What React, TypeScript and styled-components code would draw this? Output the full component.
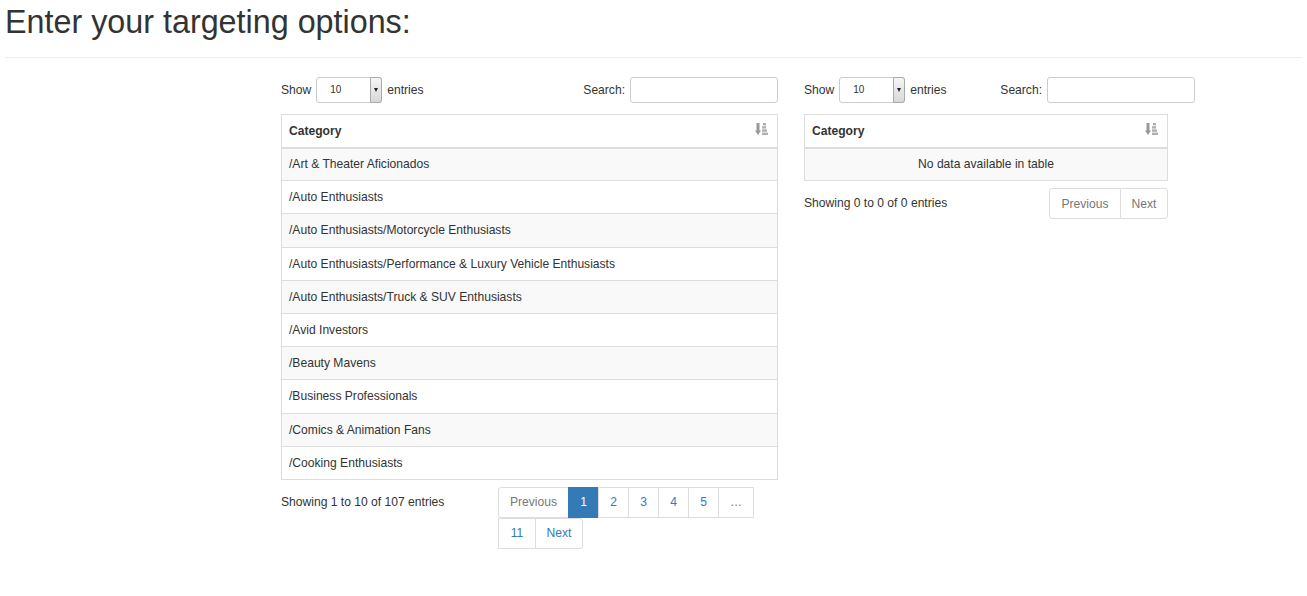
import styled, { createGlobalStyle } from 'styled-components';

const GlobalStyle = createGlobalStyle`
    body {
        margin: 0;
        background: #fff;
        color: #333;
        font-family: "Liberation Sans", Arial, sans-serif;
        font-size: 12.1px;
    }
`;

const Page = styled.div`
    padding: 0 5px;
`;

const Title = styled.h2`
    margin: 0;
    padding-top: 3px;
    font-size: 32.3px;
    font-weight: 400;
    line-height: 38px;
    color: #333;
`;

const Rule = styled.hr`
    margin: 16px 0 19px;
    border: 0;
    border-top: 1px solid #eee;
`;

const Columns = styled.div`
    display: grid;
    grid-template-columns: 497px 391px;
    gap: 26px;
    padding-left: 276px;
`;

const Wrapper = styled.div`
    display: flex;
    flex-direction: column;
`;

const Controls = styled.div`
    display: flex;
    justify-content: space-between;
    align-items: center;
    height: 26px;
    margin-bottom: 11px;
`;

const Label = styled.label`
    display: flex;
    align-items: center;
    gap: 5px;
`;

const SelectBox = styled.div`
    position: relative;
    width: 66px;
    height: 26px;
    box-sizing: border-box;
    border: 1px solid #ccc;
    border-radius: 3px;
    font-size: 10px;
    line-height: 24px;
    padding-left: 13px;
    background: #fff;
`;

const SelectArrow = styled.span`
    position: absolute;
    right: -1px;
    top: -1px;
    width: 12px;
    height: 26px;
    box-sizing: border-box;
    border: 1px solid #aaa;
    border-radius: 0 3px 3px 0;
    background: linear-gradient(#f6f6f6, #d8d8d8);
    &::after {
        content: '';
        position: absolute;
        left: 2.5px;
        top: 10px;
        border-left: 2.5px solid transparent;
        border-right: 2.5px solid transparent;
        border-top: 4px solid #222;
    }
`;

const SearchInput = styled.input`
    width: 148px;
    height: 26px;
    box-sizing: border-box;
    border: 1px solid #ccc;
    border-radius: 3px;
    margin: 0;
`;

const Table = styled.table<{ $width: number }>`
    width: ${p => p.$width}px;
    border-collapse: collapse;
    border: 1px solid #ddd;
`;

const HeadCell = styled.th`
    position: relative;
    height: 33px;
    box-sizing: border-box;
    padding: 0 7px;
    text-align: left;
    font-weight: 700;
    font-size: 12.1px;
    border-bottom: 2px solid #ddd;
`;

const SortIcon = styled.svg`
    position: absolute;
    right: 9px;
    top: 8px;
`;

const Row = styled.tr<{ $odd: boolean }>`
    background: ${p => (p.$odd ? '#f9f9f9' : '#fff')};
`;

const Cell = styled.td<{ $center?: boolean }>`
    height: 33.2px;
    box-sizing: border-box;
    padding: 0 7px;
    border-top: 1px solid #ddd;
    text-align: ${p => (p.$center ? 'center' : 'left')};
`;

const Footer = styled.div<{ $width: number }>`
    display: flex;
    justify-content: space-between;
    align-items: flex-start;
    width: ${p => p.$width}px;
    margin-top: 7px;
`;

const Info = styled.div`
    padding-top: 8px;
`;

const Pager = styled.div<{ $width?: number }>`
    display: flex;
    flex-wrap: wrap;
    width: ${p => (p.$width ? `${p.$width}px` : 'auto')};
    margin-right: ${p => (p.$width ? '23px' : '0')};
`;

const PageButton = styled.span<{ $active?: boolean; $disabled?: boolean; $w: number }>`
    display: flex;
    align-items: center;
    justify-content: center;
    width: ${p => p.$w}px;
    height: 31px;
    box-sizing: border-box;
    margin-left: -1px;
    border: 1px solid ${p => (p.$active ? '#337ab7' : '#ddd')};
    background: ${p => (p.$active ? '#337ab7' : '#fff')};
    color: ${p => (p.$active ? '#fff' : p.$disabled ? '#777' : '#337ab7')};
    font-size: 12.1px;
    &:first-child {
        border-radius: 3px 0 0 3px;
    }
    &:last-child {
        border-radius: 0 3px 3px 0;
    }
`;

const categories = [
    '/Art & Theater Aficionados',
    '/Auto Enthusiasts',
    '/Auto Enthusiasts/Motorcycle Enthusiasts',
    '/Auto Enthusiasts/Performance & Luxury Vehicle Enthusiasts',
    '/Auto Enthusiasts/Truck & SUV Enthusiasts',
    '/Avid Investors',
    '/Beauty Mavens',
    '/Business Professionals',
    '/Comics & Animation Fans',
    '/Cooking Enthusiasts',
];

const Sort = () => (
    <SortIcon width="13" height="13" viewBox="0 0 13 13">
        <rect x="1.5" y="0" width="3" height="8" fill="#999" />
        <polygon points="0,7.5 6,7.5 3,12" fill="#999" />
        <rect x="8" y="0" width="3" height="2.4" fill="#b0b0b0" />
        <rect x="7" y="3.2" width="4" height="2.4" fill="#b0b0b0" />
        <rect x="7" y="6.4" width="5" height="2.4" fill="#b0b0b0" />
        <rect x="7" y="9.6" width="6" height="2.4" fill="#b0b0b0" />
    </SortIcon>
);

const TopControls = () => (
    <Controls>
        <Label>
            Show
            <SelectBox>
                10
                <SelectArrow />
            </SelectBox>
            entries
        </Label>
        <Label>
            Search:
            <SearchInput />
        </Label>
    </Controls>
);

const App = () => (
    <Page>
        <GlobalStyle />
        <Title>Enter your targeting options:</Title>
        <Rule />
        <Columns>
            <Wrapper>
                <TopControls />
                <Table $width={497}>
                    <thead>
                        <tr>
                            <HeadCell>
                                Category
                                <Sort />
                            </HeadCell>
                        </tr>
                    </thead>
                    <tbody>
                        {categories.map((c, i) => (
                            <Row key={c} $odd={i % 2 === 0}>
                                <Cell>{c}</Cell>
                            </Row>
                        ))}
                    </tbody>
                </Table>
                <Footer $width={497}>
                    <Info>Showing 1 to 10 of 107 entries</Info>
                    <Pager $width={256}>
                        <PageButton $w={71} $disabled>Previous</PageButton>
                        <PageButton $w={31} $active>1</PageButton>
                        <PageButton $w={31}>2</PageButton>
                        <PageButton $w={31}>3</PageButton>
                        <PageButton $w={31}>4</PageButton>
                        <PageButton $w={31}>5</PageButton>
                        <PageButton $w={36} $disabled>…</PageButton>
                        <PageButton $w={38}>11</PageButton>
                        <PageButton $w={48}>Next</PageButton>
                    </Pager>
                </Footer>
            </Wrapper>
            <Wrapper>
                <TopControls />
                <Table $width={364}>
                    <thead>
                        <tr>
                            <HeadCell>
                                Category
                                <Sort />
                            </HeadCell>
                        </tr>
                    </thead>
                    <tbody>
                        <Row $odd>
                            <Cell $center>No data available in table</Cell>
                        </Row>
                    </tbody>
                </Table>
                <Footer $width={364}>
                    <Info>Showing 0 to 0 of 0 entries</Info>
                    <Pager>
                        <PageButton $w={72} $disabled>Previous</PageButton>
                        <PageButton $w={48} $disabled>Next</PageButton>
                    </Pager>
                </Footer>
            </Wrapper>
        </Columns>
    </Page>
);

export default App;
